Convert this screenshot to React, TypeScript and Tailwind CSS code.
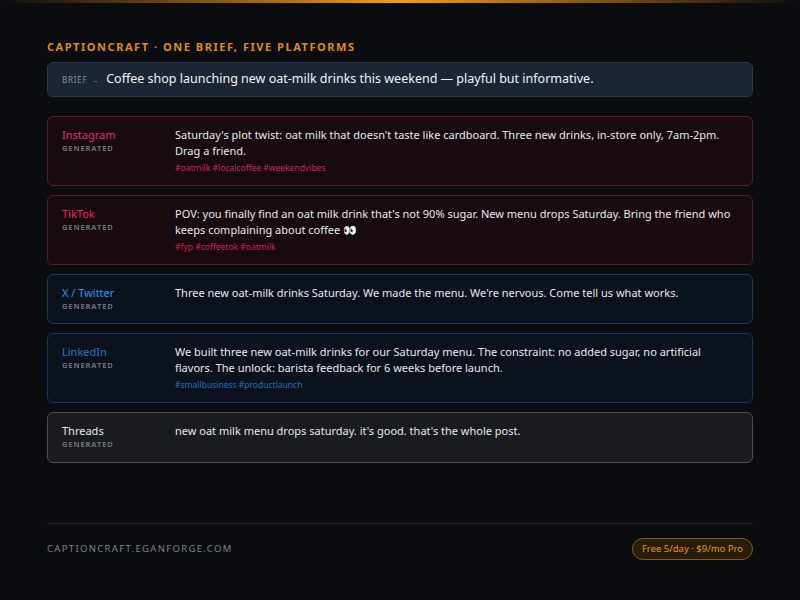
import React from "react";

const cards = [
  {
    name: "Instagram",
    text: "Saturday's plot twist: oat milk that doesn't taste like cardboard. Three new drinks, in-store only, 7am-2pm. Drag a friend.",
    tags: "#oatmilk #localcoffee #weekendvibes",
    box: "border-[#5a1a2c] bg-[#170b10]",
    label: "text-[#e0306a]",
    tag: "text-[#c82a5c]",
  },
  {
    name: "TikTok",
    text: "POV: you finally find an oat milk drink that's not 90% sugar. New menu drops Saturday. Bring the friend who keeps complaining about coffee 👀",
    tags: "#fyp #coffeetok #oatmilk",
    box: "border-[#5a1a2c] bg-[#170b10]",
    label: "text-[#f0245a]",
    tag: "text-[#d0204e]",
  },
  {
    name: "X / Twitter",
    text: "Three new oat-milk drinks Saturday. We made the menu. We're nervous. Come tell us what works.",
    tags: "",
    box: "border-[#163a5a] bg-[#0b121b]",
    label: "text-[#1d9bf0]",
    tag: "",
  },
  {
    name: "LinkedIn",
    text: "We built three new oat-milk drinks for our Saturday menu. The constraint: no added sugar, no artificial flavors. The unlock: barista feedback for 6 weeks before launch.",
    tags: "#smallbusiness #productlaunch",
    box: "border-[#14365a] bg-[#0b121b]",
    label: "text-[#1f78d1]",
    tag: "text-[#1f6fc0]",
  },
  {
    name: "Threads",
    text: "new oat milk menu drops saturday. it's good. that's the whole post.",
    tags: "",
    box: "border-[#4a4d53] bg-[#1a1b1e]",
    label: "text-[#e8e8e8]",
    tag: "",
  },
];

export default function App() {
  return (
    <div className="w-[800px] h-[600px] bg-[#0a0c0f] flex flex-col font-['Liberation_Sans',Arial,sans-serif] text-[#e6e8eb]">
      <div className="h-[3px] bg-gradient-to-r from-transparent via-[#f59e0b] to-transparent" />
      <div className="flex-1 px-[47px] pt-[37px] flex flex-col">
        <div className="text-[11px] leading-[14px] font-bold tracking-[0.14em] text-[#e08a12]">
          CAPTIONCRAFT · ONE BRIEF, FIVE PLATFORMS
        </div>
        <div className="mt-[8px] h-[35px] rounded-md border border-[#2b3648] bg-[#1c2533] flex items-center px-[14px] gap-[7px]">
          <span className="text-[8px] tracking-[0.1em] text-[#8591a3]">BRIEF →</span>
          <span className="text-[12.5px] text-[#f1f3f6]">
            Coffee shop launching new oat-milk drinks this weekend — playful but informative.
          </span>
        </div>
        <div className="mt-[19px] flex flex-col gap-[9px]">
          {cards.map((c) => (
            <div key={c.name} className={`rounded-md border ${c.box} flex px-[14px] pt-[10px] pb-[11px]`}>
              <div className="w-[113px] shrink-0">
                <div className={`text-[11px] leading-[16px] ${c.label}`}>{c.name}</div>
                <div className="text-[7.5px] font-bold tracking-[0.12em] text-[#6b717b]">GENERATED</div>
              </div>
              <div className="flex-1">
                <div className="text-[11px] leading-[16px] text-[#e6e8eb]">{c.text}</div>
                {c.tags && <div className={`mt-[3px] text-[8.5px] leading-[12px] ${c.tag}`}>{c.tags}</div>}
              </div>
            </div>
          ))}
        </div>
        <div className="mt-auto mb-[40px] border-t border-[#1e2329] pt-[14px] flex items-center justify-between">
          <span className="text-[9.5px] tracking-[0.14em] text-[#7d838c]">CAPTIONCRAFT.EGANFORGE.COM</span>
          <span className="rounded-full border border-[#8a5a12] bg-[#2a1d08] px-[9px] py-[3px] text-[9.5px] text-[#e8980f]">
            Free 5/day · $9/mo Pro
          </span>
        </div>
      </div>
    </div>
  );
}
